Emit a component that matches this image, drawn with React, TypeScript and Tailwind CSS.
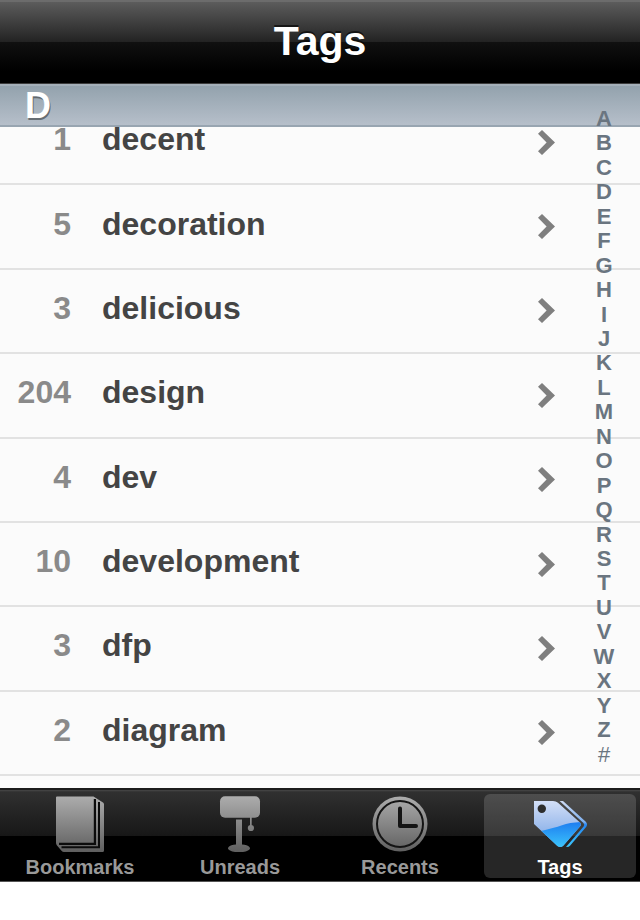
import React from "react";

const tags = [
  { count: 1, name: "decent" },
  { count: 5, name: "decoration" },
  { count: 3, name: "delicious" },
  { count: 204, name: "design" },
  { count: 4, name: "dev" },
  { count: 10, name: "development" },
  { count: 3, name: "dfp" },
  { count: 2, name: "diagram" },
];

const letters = "ABCDEFGHIJKLMNOPQRSTUVWXYZ#".split("");

function Chevron() {
  return (
    <svg width="17" height="25" viewBox="0 0 17 25" aria-hidden="true">
      <path d="M4 0 17 12.5 4 25 0 21.2 8.6 12.5 0 3.8Z" fill="#7f7f7f" />
    </svg>
  );
}

function GreyGradient({ id }: { id: string }) {
  return (
    <linearGradient id={id} gradientUnits="userSpaceOnUse" x1="0" y1="0" x2="0" y2="56">
      <stop offset="0" stopColor="#adadad" />
      <stop offset="1" stopColor="#5f5f5f" />
    </linearGradient>
  );
}

function BookIcon() {
  return (
    <svg width="56" height="56" viewBox="0 0 56 56" aria-hidden="true">
      <defs>
        <GreyGradient id="book" />
      </defs>
      <path d="M5 0.5H41.5L51 6.5Q52 7.2 52 8.5V54.5Q52 56 50.5 56H12Q10.5 56 9.5 54.8L5 49.5Q4 48.3 4 47V1.5Q4 0.5 5 0.5Z" fill="url(#book)" />
      <path d="M42.9 3V47.8H7" fill="none" stroke="#0c0c0c" strokeWidth="2.2" />
      <path d="M47 6V51.2H9.5" fill="none" stroke="#0c0c0c" strokeWidth="2" />
    </svg>
  );
}

function LampIcon() {
  return (
    <svg width="56" height="56" viewBox="0 0 56 56" aria-hidden="true">
      <defs>
        <GreyGradient id="lamp" />
      </defs>
      <g fill="url(#lamp)">
        <rect x="8" y="0.3" width="40" height="21.4" rx="5" />
        <path d="M24 23.5H30V48.4A11 4 0 1 1 24 48.4Z" />
        <rect x="38" y="21" width="1.7" height="9" />
        <circle cx="38.9" cy="32" r="3.1" />
      </g>
    </svg>
  );
}

function ClockIcon() {
  return (
    <svg width="56" height="56" viewBox="0 0 56 56" aria-hidden="true">
      <defs>
        <GreyGradient id="clock" />
      </defs>
      <circle cx="28" cy="28" r="27.5" fill="url(#clock)" />
      <circle cx="28" cy="28" r="23" fill="none" stroke="#141414" strokeWidth="2" />
      <path d="M28 12.5V30H44" fill="none" stroke="#141414" strokeWidth="4" strokeLinecap="round" strokeLinejoin="round" />
    </svg>
  );
}

function TagIcon() {
  return (
    <svg width="56" height="56" viewBox="0 0 56 56" aria-hidden="true">
      <defs>
        <linearGradient id="tagLight" x1="0" y1="0" x2="0" y2="1">
          <stop offset="0" stopColor="#d3dff7" />
          <stop offset="1" stopColor="#6f9fe4" />
        </linearGradient>
        <linearGradient id="tagDeep" x1="0" y1="0" x2="0" y2="1">
          <stop offset="0" stopColor="#1d7df0" />
          <stop offset="1" stopColor="#3cc6fb" />
        </linearGradient>
        <linearGradient id="tagEdge" x1="0" y1="0" x2="0" y2="1">
          <stop offset="0" stopColor="#cfdcf6" />
          <stop offset="0.45" stopColor="#7fb0ee" />
          <stop offset="0.52" stopColor="#2585f1" />
          <stop offset="1" stopColor="#3cc6fb" />
        </linearGradient>
        <clipPath id="tagShape">
          <path d="M2 5H21Q24 5 26 6.8L48 26.6Q49.6 28.2 48.4 30L31.5 49.6Q28.5 52.4 25.4 50L2 28Z" />
        </clipPath>
      </defs>
      <g clipPath="url(#tagShape)">
        <rect x="2" y="5" width="49" height="47" fill="url(#tagLight)" />
        <path d="M9 35Q22 32 30 29.2T51 26V52H9Z" fill="url(#tagDeep)" />
      </g>
      <circle cx="9.8" cy="12.8" r="4.2" fill="#2d2d2d" />
      <path
        d="M27.6 5H31L53.8 25.7Q56 28.2 54.3 30.8L38 49.8Q36.7 51.3 34 51L51.6 30.5Q53 28.7 51.4 27Z"
        fill="url(#tagEdge)"
      />
    </svg>
  );
}

const tabs = [
  { label: "Bookmarks", Icon: BookIcon, active: false },
  { label: "Unreads", Icon: LampIcon, active: false },
  { label: "Recents", Icon: ClockIcon, active: false },
  { label: "Tags", Icon: TagIcon, active: true },
];

export default function App() {
  return (
    <div className="min-h-screen bg-white font-['Liberation_Sans',Arial,sans-serif] font-bold">
      <header className="flex h-[84px] items-center justify-center border-t-2 border-b border-t-[#6c6c6c] border-b-[#3c3c3c] bg-[linear-gradient(#5c5c5c_0%,#222222_50%,#101010_50%,#000000_85%)] pb-1">
        <h1 className="text-[41px] leading-[46px] text-white [text-shadow:0_-2px_0_rgba(0,0,0,0.6)]">Tags</h1>
      </header>

      <main className="relative">
        <h2 className="flex h-[43px] items-center border-t-2 border-b-2 border-t-[#a5b0b9] border-b-[#98a5b1] bg-[linear-gradient(#93a2ad,#b6bfca)] pl-[25px] text-[36px] leading-[40px] text-white [text-shadow:1px_2px_0_rgba(70,75,80,0.7)]">
          D
        </h2>

        <div className="flow-root h-[661px] bg-[#fbfbfb]">
          <ul className="-mt-[26px] grid h-[675px] grid-rows-8">
            {tags.map((tag) => (
              <li key={tag.name} className="border-b-2 border-[#e2e2e2]">
                <a href={"#" + tag.name} className="flex h-full items-center pr-[85px] text-[32px] leading-[40px]">
                  <span className="w-[71px] pb-[6px] text-right text-[#8a8a8a]">{tag.count}</span>
                  <span className="flex-1 pb-[6px] pl-[31px] text-[#444444]">{tag.name}</span>
                  <Chevron />
                </a>
              </li>
            ))}
          </ul>
        </div>

        <nav
          aria-label="Index"
          className="absolute top-[23px] right-[16px] grid h-[660px] w-[40px] grid-rows-27 text-center text-[22px] leading-[24px] text-[#6a7580]"
        >
          {letters.map((letter) => (
            <a key={letter} href={"#" + letter} className={letter === "#" ? "font-normal" : ""}>
              {letter}
            </a>
          ))}
        </nav>
      </main>

      <nav
        aria-label="Tabs"
        className="grid h-[94px] grid-cols-4 border-t-2 border-b border-t-[#1c1c1c] border-b-[#555555] bg-[linear-gradient(#484848_0px,#303030_2px,#171717_46px,#000000_46px)] pt-1"
      >
        {tabs.map(({ label, Icon, active }) => (
          <button
            key={label}
            type="button"
            className={
              "mx-1 flex h-[84px] flex-col items-center gap-1 rounded-md pt-[2px] text-[20px] leading-[22px] " +
              (active ? "bg-white/15 text-white" : "text-[#999999]")
            }
          >
            <Icon />
            <span>{label}</span>
          </button>
        ))}
      </nav>
    </div>
  );
}
